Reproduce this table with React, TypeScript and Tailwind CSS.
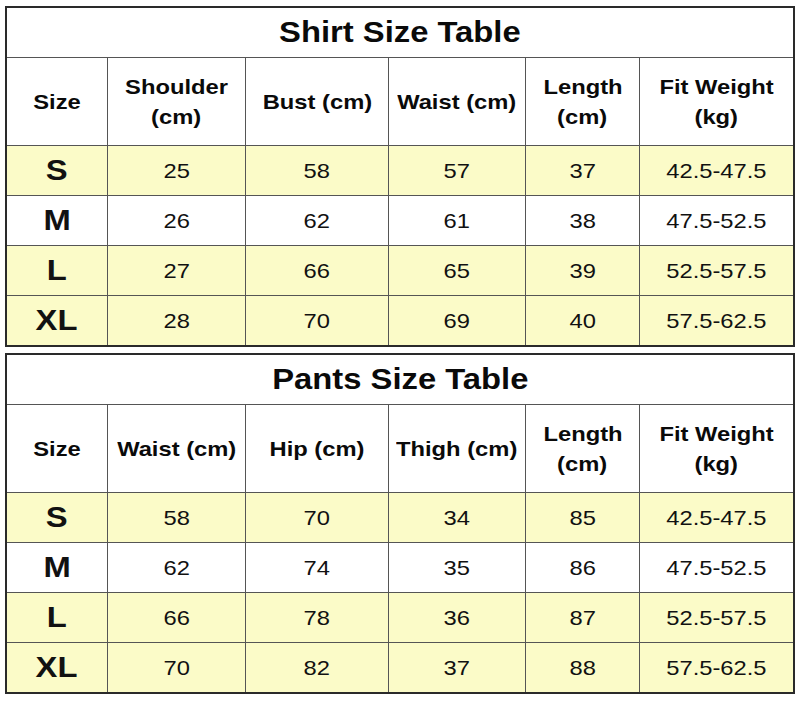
import React from "react";

type Table = {
  title: string;
  headers: string[][];
  rows: string[][];
};

const tables: Table[] = [
  {
    title: "Shirt Size Table",
    headers: [["Size"], ["Shoulder", "(cm)"], ["Bust (cm)"], ["Waist (cm)"], ["Length", "(cm)"], ["Fit Weight", "(kg)"]],
    rows: [
      ["S", "25", "58", "57", "37", "42.5-47.5"],
      ["M", "26", "62", "61", "38", "47.5-52.5"],
      ["L", "27", "66", "65", "39", "52.5-57.5"],
      ["XL", "28", "70", "69", "40", "57.5-62.5"],
    ],
  },
  {
    title: "Pants Size Table",
    headers: [["Size"], ["Waist (cm)"], ["Hip (cm)"], ["Thigh (cm)"], ["Length", "(cm)"], ["Fit Weight", "(kg)"]],
    rows: [
      ["S", "58", "70", "34", "85", "42.5-47.5"],
      ["M", "62", "74", "35", "86", "47.5-52.5"],
      ["L", "66", "78", "36", "87", "52.5-57.5"],
      ["XL", "70", "82", "37", "88", "57.5-62.5"],
    ],
  },
];

function Stretch({ children, className = "" }: { children: React.ReactNode; className?: string }) {
  // source image is a little wider than Arial, so widen glyphs
  return <span className={`inline-block scale-x-[1.13] ${className}`}>{children}</span>;
}

function SizeTable({ table }: { table: Table }) {
  return (
    <div className="w-[790px] border-2 border-[#2a2a2a] bg-[#555]">
      <div className="grid grid-cols-[100px_137px_142px_136px_113px_153px] grid-rows-[49px_87px_49px_49px_49px_49px] gap-px">
        <div className="col-span-6 flex items-center justify-center bg-white text-[29px] font-bold text-[#0a0a0a]">
          <Stretch>{table.title}</Stretch>
        </div>
        {table.headers.map((lines, i) => (
          <div key={i} className="flex flex-col items-center justify-center bg-white text-[21px] leading-[30px] font-bold text-[#0a0a0a]">
            {lines.map((l) => (
              <Stretch key={l}>{l}</Stretch>
            ))}
          </div>
        ))}
        {table.rows.map((row, r) =>
          row.map((cell, c) => (
            <div
              key={`${r}-${c}`}
              className={`flex items-center justify-center pt-px text-[#111] ${r === 1 ? "bg-white" : "bg-[#fbfbc8]"} ${
                c === 0 ? "text-[29px] font-bold" : "text-[21px]"
              }`}
            >
              <Stretch>{cell}</Stretch>
            </div>
          ))
        )}
      </div>
    </div>
  );
}

export default function App() {
  return (
    <div className="w-[800px] h-[710px] bg-white pl-[5px] pt-[6px] flex flex-col gap-[6px] font-['Liberation_Sans',Arial,sans-serif]">
      {tables.map((t) => (
        <SizeTable key={t.title} table={t} />
      ))}
    </div>
  );
}
